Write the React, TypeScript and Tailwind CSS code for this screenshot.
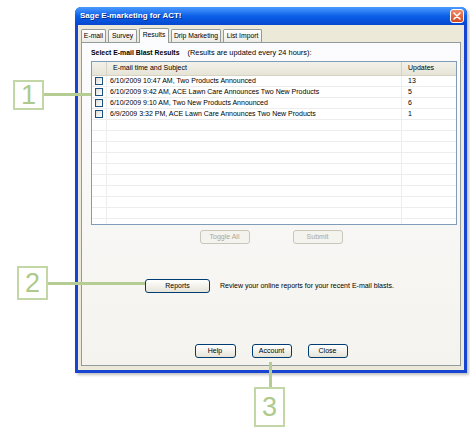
import React from "react";

const rows: [string, string][] = [
  ["6/10/2009 10:47 AM, Two Products Announced", "13"],
  ["6/10/2009 9:42 AM, ACE Lawn Care Announces Two New Products", "5"],
  ["6/10/2009 9:10 AM, Two New Products Announced", "6"],
  ["6/9/2009 3:32 PM, ACE Lawn Care Announces Two New Products", "1"],
];

function XpButton({ label, w, disabled }: { label: string; w: string; disabled?: boolean }) {
  return (
    <div
      className={
        "flex items-center justify-center h-[14px] rounded-[3px] border text-[7px] " +
        w +
        (disabled
          ? " border-[#c9c7ba] text-[#aca899] bg-[#f4f3ee]"
          : " border-[#003c74] text-black bg-gradient-to-b from-white to-[#e6e4d8]")
      }
    >
      {label}
    </div>
  );
}

function Callout({ n, className }: { n: string; className: string }) {
  return (
    <div
      className={
        "absolute flex items-center justify-center border-[2px] border-[#c3d7a6] bg-white text-[#aec98a] text-[27px] leading-none " +
        className
      }
    >
      {n}
    </div>
  );
}

export default function App() {
  const all: [string, string][] = [...rows, ...Array.from({ length: 10 }, () => ["", ""] as [string, string])];
  const tabs = [
    { t: "E-mail", w: "w-[25px]" },
    { t: "Survey", w: "w-[29px]" },
    { t: "Results", w: "w-[30px]", sel: true },
    { t: "Drip Marketing", w: "w-[50px]" },
    { t: "List Import", w: "w-[39px]" },
  ];
  return (
    <div className="relative w-[470px] h-[440px] bg-white overflow-hidden pt-[7px] pl-[75px] [font-family:'Liberation_Sans',Arial,sans-serif]">
      {/* Window */}
      <div className="w-[392px] h-[366px] flex flex-col rounded-t-[6px] bg-[#1745d2] shadow-[2px_2px_3px_rgba(0,0,0,0.25)]">
        <div className="h-[18px] flex items-center justify-between pl-[5px] pr-[3px] rounded-t-[6px] bg-gradient-to-b from-[#4a9bff] via-[#0b5fe8] to-[#0647cf]">
          <span className="text-white font-bold text-[8px] [text-shadow:1px_1px_0_#0a2a8a]">Sage E-marketing for ACT!</span>
          <div className="w-[14px] h-[14px] rounded-[3px] border border-white bg-gradient-to-b from-[#f08a68] to-[#d2461c] flex items-center justify-center">
            <svg width="8" height="8" viewBox="0 0 8 8">
              <path d="M1 1 L7 7 M7 1 L1 7" stroke="white" strokeWidth="1.6" strokeLinecap="round" />
            </svg>
          </div>
        </div>
        <div className="flex-1 mx-[3px] mb-[3px] bg-[#ece9d8] flex flex-col pt-[2px] pl-[3px] pr-[3px] pb-[4px]">
          {/* Tabs */}
          <div className="flex items-end h-[15px] gap-[2px] relative z-10">
            {tabs.map((tb) => (
              <div
                key={tb.t}
                className={
                  "flex items-center justify-center border border-b-0 border-[#919b9c] rounded-t-[2px] text-[6.8px] text-black whitespace-nowrap " +
                  tb.w +
                  (tb.sel
                    ? " h-[15px] bg-[#fcfcfe] -mb-[1px] pb-[1px]"
                    : " h-[13px] bg-gradient-to-b from-white to-[#ecebe5]")
                }
              >
                {tb.t}
              </div>
            ))}
          </div>
          {/* Panel */}
          <div className="flex-1 border border-[#919b9c] bg-gradient-to-b from-[#fcfcfe] to-[#f4f3ee] flex flex-col pl-[9px] pr-[3px]">
            <div className="mt-[4px] h-[12px] flex items-center text-[7.4px] text-black">
              <span className="font-bold text-[6.9px]">Select E-mail Blast Results</span>
              <span className="ml-[8px]">(Results are updated every 24 hours):</span>
            </div>
            {/* List */}
            <div className="mt-[2px] h-[164px] border border-[#7f9db9] bg-white flex flex-col overflow-hidden">
              <div className="grid grid-cols-[15px_1fr_54px] h-[14px] shrink-0 bg-gradient-to-b from-[#f3f2ea] to-[#e6e4d7] border-b border-[#d6d3c4] text-[7px] text-black">
                <div className="border-r border-[#d6d3c4]" />
                <div className="flex items-center pl-[6px] border-r border-[#d6d3c4]">E-mail time and Subject</div>
                <div className="flex items-center pl-[6px]">Updates</div>
              </div>
              {all.map((r, i) => (
                <div key={i} className="grid grid-cols-[15px_1fr_54px] h-[11px] shrink-0 border-b border-[#ededed] text-[7px] text-black">
                  <div className="flex items-center justify-center border-r border-[#ededed]">
                    {r[0] && <div className="w-[8px] h-[8px] border border-[#1c5180] bg-gradient-to-br from-[#dcdcd7] to-white" />}
                  </div>
                  <div className="flex items-center pl-[3px] border-r border-[#ededed] whitespace-nowrap">{r[0]}</div>
                  <div className="flex items-center pl-[6px]">{r[1]}</div>
                </div>
              ))}
            </div>
            {/* Toggle / Submit */}
            <div className="mt-[5px] flex justify-center gap-[43px] pr-[6px]">
              <XpButton label="Toggle All" w="w-[50px]" disabled />
              <XpButton label="Submit" w="w-[50px]" disabled />
            </div>
            {/* Reports */}
            <div className="mt-[35px] flex items-center pl-[54px]">
              <XpButton label="Reports" w="w-[65px]" />
              <span className="ml-[10px] text-[7px] text-black">Review your online reports for your recent E-mail blasts.</span>
            </div>
            {/* Bottom buttons */}
            <div className="mt-[51px] flex justify-center gap-[16px] pr-[6px]">
              <XpButton label="Help" w="w-[41px]" />
              <XpButton label="Account" w="w-[40px]" />
              <XpButton label="Close" w="w-[40px]" />
            </div>
          </div>
        </div>
      </div>

      {/* Callout lines */}
      <div className="absolute left-[43px] top-[93px] w-[48px] h-[3px] bg-[#b5cd93]" />
      <div className="absolute left-[48px] top-[282px] w-[97px] h-[3px] bg-[#b5cd93]" />
      <div className="absolute left-[269px] top-[362px] w-[3px] h-[26px] bg-[#b5cd93]" />
      <Callout n="1" className="left-[13px] top-[80px] w-[31px] h-[30px]" />
      <Callout n="2" className="left-[17px] top-[266px] w-[31px] h-[34px]" />
      <Callout n="3" className="left-[254px] top-[387px] w-[31px] h-[40px]" />
    </div>
  );
}
